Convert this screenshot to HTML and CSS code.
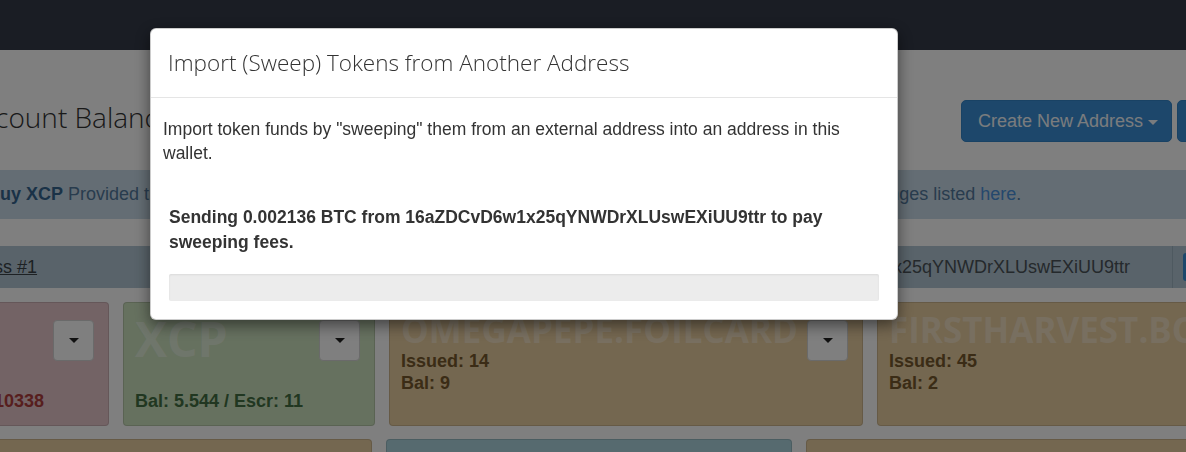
FILE: index.html
```html
<!DOCTYPE html>
<html lang="en">
<head>
  <meta charset="UTF-8">
  <meta name="viewport" content="width=device-width, initial-scale=1.0">
  <title>Wallet - Balances</title>
  <link rel="stylesheet" href="styles.css">
</head>
<body>
  <nav class="navbar"></nav>

  <main class="page">
    <div class="page-head">
      <h1>Account Balances</h1>
      <div class="head-actions">
        <button type="button" class="btn btn-primary">Create New Address <span class="caret"></span></button>
        <button type="button" class="btn btn-primary btn-more">Tools <span class="caret"></span></button>
      </div>
    </div>

    <div class="alert-info">
      <strong>Buy XCP</strong> Provided that you already hold some BTC, you can buy XCP from any of the many decentralized exchanges listed <a href="#">here</a>.
    </div>

    <div class="address-bar">
      <a href="#" class="address-name">Address #1</a>
      <span class="address-value">16aZDCvD6w1x25qYNWDrXLUswEXiUU9ttr</span>
      <div class="address-tools">
        <button type="button" class="btn-mini"></button>
      </div>
    </div>

    <div class="balances">
      <div class="card card-red w-201">
        <div class="card-info bottom">Bal: 0.0010338</div>
        <button type="button" class="card-toggle"><span class="caret"></span></button>
      </div>
      <div class="card card-green w-252">
        <div class="card-name big">XCP</div>
        <div class="card-info bottom">Bal: 5.544 / Escr: 11</div>
        <button type="button" class="card-toggle"><span class="caret"></span></button>
      </div>
      <div class="card card-yellow w-474">
        <div class="card-name">OMEGAPEPE.FOILCARD</div>
        <div class="card-info">Issued: 14<br>Bal: 9</div>
        <button type="button" class="card-toggle"><span class="caret"></span></button>
      </div>
      <div class="card card-yellow w-420">
        <div class="card-name">FIRSTHARVEST.BOTTLE</div>
        <div class="card-info">Issued: 45<br>Bal: 2</div>
      </div>

      <div class="card card-yellow w-464">
        <div class="card-name">RAREPEPE</div>
      </div>
      <div class="card card-blue w-406">
        <div class="card-name">PEPECASH</div>
      </div>
      <div class="card card-yellow w-400">
        <div class="card-name">KARMA</div>
      </div>
    </div>
  </main>

  <div class="modal-backdrop"></div>

  <div class="modal">
    <div class="modal-dialog">
      <div class="modal-header">
        <h4 class="modal-title">Import (Sweep) Tokens from Another Address</h4>
      </div>
      <div class="modal-body">
        <p class="modal-intro">Import token funds by "sweeping" them from an external address into an address in this wallet.</p>
        <div class="sweep-status">
          <p class="sweep-msg">Sending 0.002136 BTC from 16aZDCvD6w1x25qYNWDrXLUswEXiUU9ttr to pay sweeping fees.</p>
          <div class="progress"><div class="progress-bar" style="width: 0%"></div></div>
        </div>
      </div>
    </div>
  </div>
</body>
</html>
```

FILE: styles.css
```css
html, body {
  margin: 0;
  padding: 0;
}

body {
  width: 1186px;
  height: 452px;
  overflow: hidden;
  background: #fff;
  font-family: "Liberation Sans", Arial, sans-serif;
  color: #333;
}

.navbar {
  height: 50px;
  background: #343a48;
}

/* page content is wider than the window, scrolled a bit to the right */
.page {
  width: 1400px;
  margin-left: -92px;
}

.page-head {
  display: flex;
  justify-content: space-between;
  align-items: flex-start;
  margin-top: 50px;
  height: 42px;
}

.page-head h1 {
  margin: 0 0 0 57px;
  font-family: "Open Sans", sans-serif;
  font-weight: 300;
  font-size: 28px;
  line-height: 34px;
  color: #333;
}

.head-actions {
  display: flex;
  align-items: flex-start;
  gap: 5px;
}

.btn {
  box-sizing: border-box;
  height: 42px;
  border: 1px solid transparent;
  border-radius: 5px;
  font-family: "Liberation Sans", Arial, sans-serif;
  font-size: 18px;
  line-height: 24px;
  padding: 8px 13px 8px 16px;
  white-space: nowrap;
  cursor: pointer;
}

.btn-primary {
  background: #3a8fd6;
  border-color: #3384c8;
  color: #f4f8fc;
}

.btn-more {
  width: 131px;
  text-align: left;
}

.caret {
  display: inline-block;
  width: 0;
  height: 0;
  vertical-align: middle;
  border-top: 5px solid;
  border-left: 5px solid transparent;
  border-right: 5px solid transparent;
}

.alert-info {
  margin-top: 28px;
  padding: 14px 15px 15px 79px;
  background: #c8dbe8;
  font-size: 18px;
  line-height: 20px;
  color: #52789c;
  white-space: nowrap;
}

.alert-info strong {
  color: #34648f;
}

.alert-info a {
  color: #4a90da;
  text-decoration: none;
}

.address-bar {
  display: flex;
  align-items: stretch;
  margin-top: 27px;
  height: 42px;
  background: #b2c7d4;
  font-size: 18px;
  line-height: 42px;
}

.address-name {
  margin-left: 38px;
  color: #3a4248;
  text-decoration: underline;
}

.address-value {
  margin-left: auto;
  color: #4a5258;
}

.address-tools {
  box-sizing: border-box;
  width: 136px;
  margin-left: 42px;
  padding: 6px 10px;
  border-left: 1px solid #9db2c0;
  display: flex;
  align-items: center;
}

.btn-mini {
  width: 30px;
  height: 28px;
  border: 0;
  border-radius: 3px;
  background: #3a8fd6;
}

.balances {
  display: flex;
  flex-wrap: wrap;
  gap: 13px 14px;
  margin-top: 14px;
}

.card {
  position: relative;
  box-sizing: border-box;
  height: 124px;
  padding: 9px 11px 13px;
  border: 1px solid rgba(0, 0, 0, 0.12);
  border-radius: 4px;
  overflow: hidden;
  display: flex;
  flex-direction: column;
}

.w-201 { width: 201px; }
.w-252 { width: 252px; }
.w-474 { width: 474px; }
.w-420 { width: 420px; }
.w-464 { width: 464px; }
.w-406 { width: 406px; }
.w-400 { width: 400px; }

.card-red { background: #e6c6cb; color: #ae3c3c; }
.card-green { background: #cde2bf; color: #426f42; }
.card-yellow { background: #e9cea0; color: #76592c; }
.card-blue { background: #acd4de; color: #2c6580; }

.card-name {
  font-family: "Open Sans", sans-serif;
  font-weight: 700;
  font-size: 35px;
  line-height: 36px;
  color: rgba(255, 255, 255, 0.36);
  white-space: nowrap;
}

.card-name.big {
  margin-top: 3px;
  font-size: 48px;
  line-height: 48px;
  color: rgba(255, 255, 255, 0.4);
}

.card-info {
  margin-top: 2px;
  font-size: 18px;
  font-weight: bold;
  line-height: 22px;
  white-space: nowrap;
}

.card-info.bottom {
  margin-top: auto;
}

.card-toggle {
  position: absolute;
  top: 17px;
  right: 14px;
  width: 41px;
  height: 41px;
  padding: 0;
  background: #fff;
  border: 1px solid #d4d4d4;
  border-radius: 4px;
  color: #222;
  display: flex;
  align-items: center;
  justify-content: center;
}

.modal-backdrop {
  position: fixed;
  top: 0;
  left: 0;
  width: 100%;
  height: 100%;
  background: rgba(0, 0, 0, 0.5);
}

.modal {
  position: fixed;
  top: 0;
  left: 0;
  width: 100%;
  height: 100%;
}

.modal-dialog {
  box-sizing: border-box;
  width: 748px;
  margin: 28px 0 0 150px;
  background: #fff;
  border: 1px solid rgba(0, 0, 0, 0.2);
  border-radius: 6px;
  box-shadow: 0 5px 15px rgba(0, 0, 0, 0.5);
}

.modal-header {
  padding: 16px 17px 17px;
  border-bottom: 1px solid #e5e5e5;
}

.modal-title {
  margin: 0;
  font-family: "Open Sans", sans-serif;
  font-weight: 300;
  font-size: 22.5px;
  line-height: 35px;
  color: #333;
}

.modal-body {
  padding: 19px 12px 18px;
}

.modal-intro {
  margin: 0 0 40px;
  font-size: 17.5px;
  line-height: 24px;
}

.sweep-status {
  padding: 0 6px;
}

.sweep-msg {
  margin: 0 0 19px;
  font-size: 17.5px;
  font-weight: bold;
  line-height: 25px;
}

.progress {
  height: 27px;
  background: #ececec;
  border-radius: 2px;
  box-shadow: inset 0 1px 2px rgba(0, 0, 0, 0.08);
  overflow: hidden;
}

.progress-bar {
  height: 100%;
  background: #337ab7;
}
```
